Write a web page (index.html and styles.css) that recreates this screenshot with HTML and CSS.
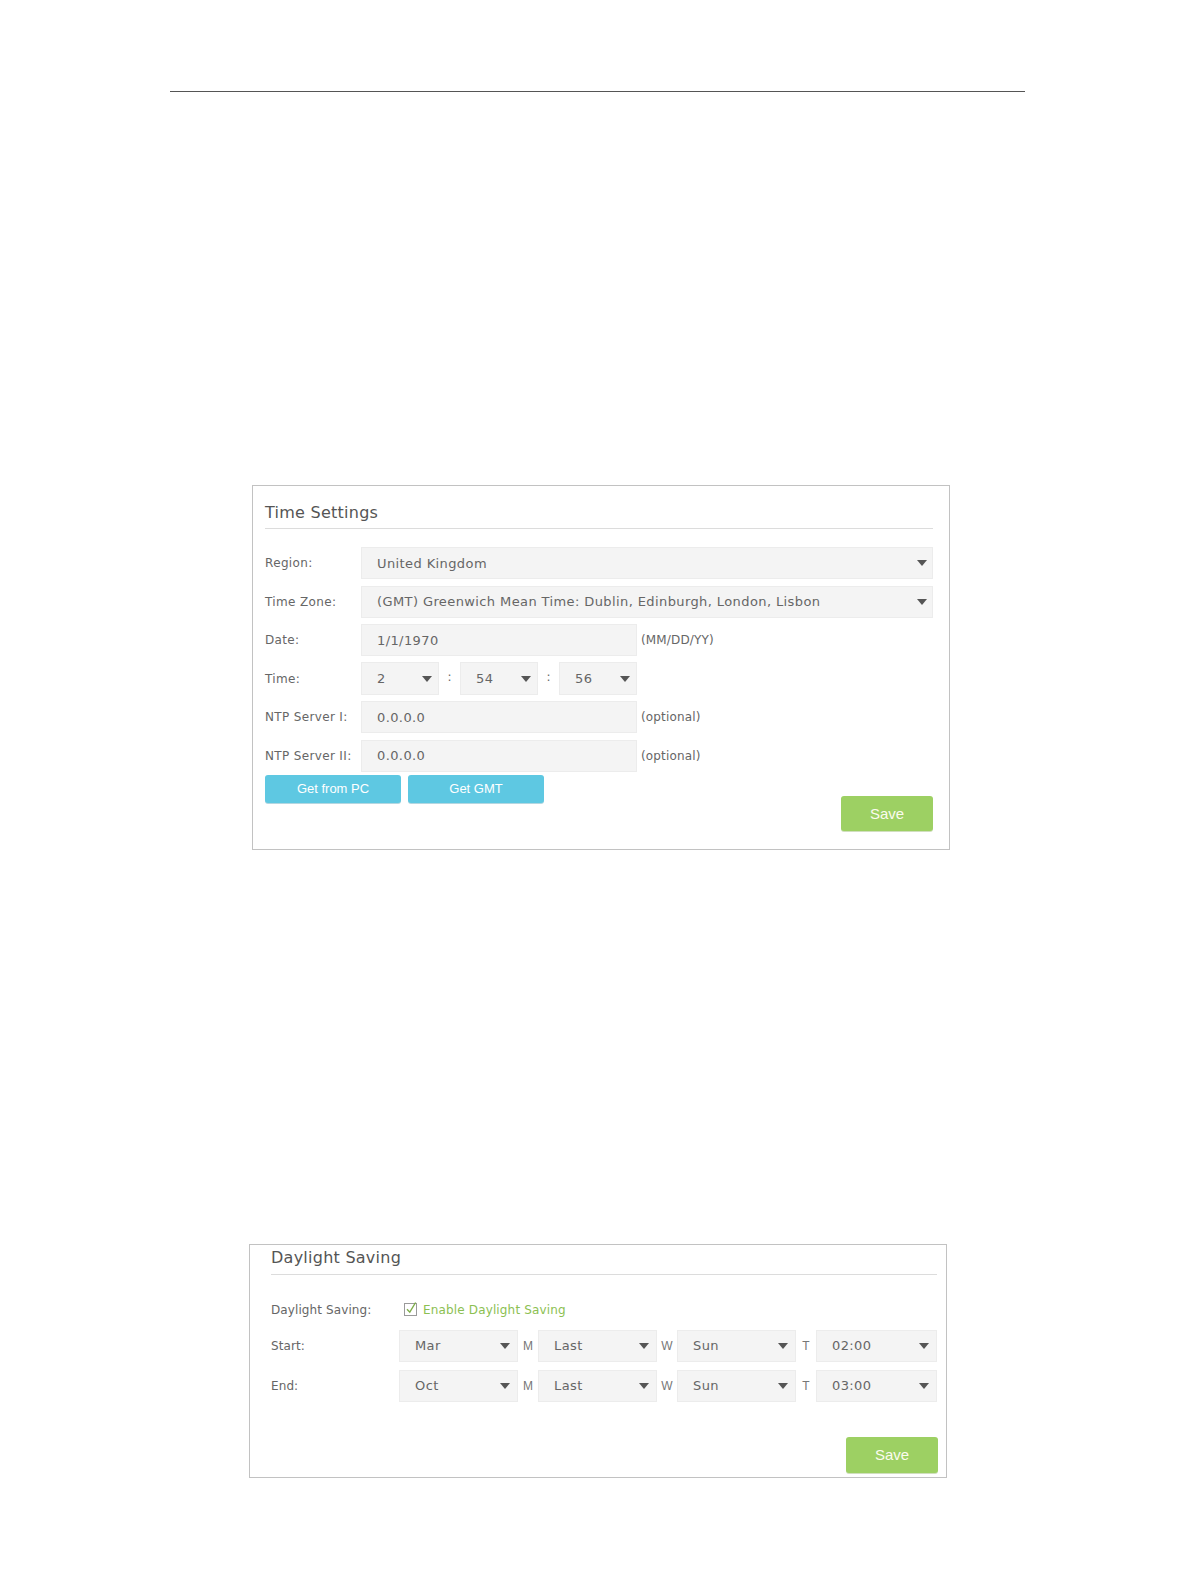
FILE: index.html
```html
<!DOCTYPE html>
<html>
<head>
<meta charset="utf-8">
<title>Time Settings</title>
<link rel="stylesheet" href="styles.css">
</head>
<body>
<div class="page-rule"></div>

<section class="panel panel-time">
  <h2 class="panel-title">Time Settings</h2>
  <div class="form">
    <div class="row">
      <div class="label">Region:</div>
      <div class="control">
        <div class="select select-wide"><span>United Kingdom</span><svg class="arrow" width="10" height="6" viewBox="0 0 10 6"><polygon points="0,0 10,0 5,6"/></svg></div>
      </div>
    </div>
    <div class="row">
      <div class="label">Time Zone:</div>
      <div class="control">
        <div class="select select-wide"><span>(GMT) Greenwich Mean Time: Dublin, Edinburgh, London, Lisbon</span><svg class="arrow" width="10" height="6" viewBox="0 0 10 6"><polygon points="0,0 10,0 5,6"/></svg></div>
      </div>
    </div>
    <div class="row">
      <div class="label">Date:</div>
      <div class="control">
        <div class="field">1/1/1970</div>
        <span class="hint">(MM/DD/YY)</span>
      </div>
    </div>
    <div class="row">
      <div class="label">Time:</div>
      <div class="control">
        <div class="select select-time"><span>2</span><svg class="arrow" width="10" height="6" viewBox="0 0 10 6"><polygon points="0,0 10,0 5,6"/></svg></div>
        <span class="colon">:</span>
        <div class="select select-time"><span>54</span><svg class="arrow" width="10" height="6" viewBox="0 0 10 6"><polygon points="0,0 10,0 5,6"/></svg></div>
        <span class="colon">:</span>
        <div class="select select-time"><span>56</span><svg class="arrow" width="10" height="6" viewBox="0 0 10 6"><polygon points="0,0 10,0 5,6"/></svg></div>
      </div>
    </div>
    <div class="row">
      <div class="label">NTP Server I:</div>
      <div class="control">
        <div class="field">0.0.0.0</div>
        <span class="hint">(optional)</span>
      </div>
    </div>
    <div class="row row-last">
      <div class="label">NTP Server II:</div>
      <div class="control">
        <div class="field">0.0.0.0</div>
        <span class="hint">(optional)</span>
      </div>
    </div>
    <div class="actions">
      <div class="btn btn-blue">Get from PC</div>
      <div class="btn btn-blue">Get GMT</div>
      <div class="btn btn-save btn-save-time">Save</div>
    </div>
  </div>
</section>

<section class="panel panel-dst">
  <h2 class="panel-title">Daylight Saving</h2>
  <div class="form">
    <div class="drow drow-check">
      <div class="dlabel">Daylight Saving:</div>
      <div class="check-wrap">
        <svg class="checkbox" width="14" height="15" viewBox="0 0 14 15"><rect x="0.5" y="2.5" width="12" height="12" fill="#fff" stroke="#9a9a9a"/><path d="M3 8.2 L5.8 11.2 L11.6 1.5" fill="none" stroke="#7fae4a" stroke-width="1.4"/></svg>
        <span class="check-text">Enable Daylight Saving</span>
      </div>
    </div>
    <div class="drow">
      <div class="dlabel">Start:</div>
      <div class="dsel-group">
        <div class="select select-dst"><span>Mar</span><svg class="arrow" width="10" height="6" viewBox="0 0 10 6"><polygon points="0,0 10,0 5,6"/></svg></div>
        <span class="unit">M</span>
        <div class="select select-dst"><span>Last</span><svg class="arrow" width="10" height="6" viewBox="0 0 10 6"><polygon points="0,0 10,0 5,6"/></svg></div>
        <span class="unit">W</span>
        <div class="select select-dst"><span>Sun</span><svg class="arrow" width="10" height="6" viewBox="0 0 10 6"><polygon points="0,0 10,0 5,6"/></svg></div>
        <span class="unit">T</span>
        <div class="select select-dst select-dst-last"><span>02:00</span><svg class="arrow" width="10" height="6" viewBox="0 0 10 6"><polygon points="0,0 10,0 5,6"/></svg></div>
      </div>
    </div>
    <div class="drow drow-last">
      <div class="dlabel">End:</div>
      <div class="dsel-group">
        <div class="select select-dst"><span>Oct</span><svg class="arrow" width="10" height="6" viewBox="0 0 10 6"><polygon points="0,0 10,0 5,6"/></svg></div>
        <span class="unit">M</span>
        <div class="select select-dst"><span>Last</span><svg class="arrow" width="10" height="6" viewBox="0 0 10 6"><polygon points="0,0 10,0 5,6"/></svg></div>
        <span class="unit">W</span>
        <div class="select select-dst"><span>Sun</span><svg class="arrow" width="10" height="6" viewBox="0 0 10 6"><polygon points="0,0 10,0 5,6"/></svg></div>
        <span class="unit">T</span>
        <div class="select select-dst select-dst-last"><span>03:00</span><svg class="arrow" width="10" height="6" viewBox="0 0 10 6"><polygon points="0,0 10,0 5,6"/></svg></div>
      </div>
    </div>
    <div class="dst-actions">
      <div class="btn btn-save btn-save-dst">Save</div>
    </div>
  </div>
</section>
</body>
</html>
```

FILE: styles.css
```css
html, body {
  margin: 0;
  padding: 0;
  background: #ffffff;
}

body {
  font-family: "DejaVu Sans", Verdana, sans-serif;
  color: #666;
}

.page-rule {
  margin: 91px 0 0 170px;
  width: 855px;
  height: 1px;
  background: #555;
}

.panel {
  box-sizing: border-box;
  border: 1px solid #c2c2c2;
  background: #fff;
}

.panel-time {
  margin: 393px 0 0 252px;
  width: 698px;
  padding: 17px 16px 18px 12px;
}

.panel-dst {
  margin: 394px 0 0 249px;
  width: 698px;
  padding: 3px 9px 4px 21px;
}

.panel-title {
  margin: 0;
  font-family: "DejaVu Sans", Verdana, sans-serif;
  font-weight: normal;
  font-size: 16px;
  line-height: 19px;
  letter-spacing: 0.25px;
  color: #555;
  padding-bottom: 6px;
  border-bottom: 1px solid #dcdcdc;
}

.panel-dst .panel-title {
  padding-bottom: 7px;
}

/* Time settings form */
.panel-time .form {
  margin-top: 18px;
}

.row {
  display: flex;
  align-items: center;
  height: 32px;
  margin-bottom: 6.6px;
}

.row-last {
  margin-bottom: 0;
}

.label {
  width: 96px;
  flex: none;
  font-size: 12px;
  letter-spacing: 0.35px;
  color: #666;
}

.control {
  display: flex;
  align-items: center;
  flex: 1;
  height: 100%;
}

.select,
.field {
  box-sizing: border-box;
  height: 32px;
  background: #f4f4f4;
  border: 1px solid #ececec;
  font-size: 13px;
  letter-spacing: 0.4px;
  color: #666;
  display: flex;
  align-items: center;
  padding-left: 15px;
  white-space: nowrap;
}

.select {
  justify-content: space-between;
  padding-right: 6px;
}

.arrow {
  flex: none;
  fill: #555;
}

.select-wide {
  width: 100%;
  padding-right: 5px;
}

.field {
  width: 276px;
}

.hint {
  margin-left: 4px;
  font-size: 12px;
  letter-spacing: 0.15px;
  color: #666;
}

.select-time {
  width: 78px;
  height: 33px;
}

.colon {
  width: 21px;
  text-align: center;
  font-size: 12px;
  color: #666;
  margin-top: -3px;
}

.actions {
  display: flex;
  align-items: flex-start;
  margin-top: 3px;
}

.btn {
  box-sizing: border-box;
  display: flex;
  align-items: center;
  justify-content: center;
  font-family: "Liberation Sans", Arial, sans-serif;
  color: #fff;
  border-radius: 3px;
}

.btn-blue {
  width: 136px;
  height: 28px;
  background: #5ec8e2;
  font-size: 13px;
  margin-right: 7px;
  box-shadow: 0 1px 0 rgba(40, 140, 170, 0.35);
}

.btn-save {
  width: 92px;
  background: #9dd063;
  font-size: 15px;
  color: #fbfbee;
  box-shadow: 0 1px 0 rgba(100, 150, 40, 0.3);
}

.btn-save-time {
  height: 35px;
  margin-left: auto;
  margin-top: 21px;
}

/* Daylight saving form */
.panel-dst .form {
  margin-top: 25px;
}

.drow {
  display: flex;
  align-items: center;
  height: 32px;
  margin-bottom: 8px;
}

.drow-check {
  height: 20px;
  margin-bottom: 10px;
}

.drow-last {
  margin-bottom: 0;
}

.dlabel {
  width: 128px;
  flex: none;
  font-size: 12px;
  letter-spacing: 0.1px;
  color: #666;
}

.check-wrap {
  display: flex;
  align-items: center;
  margin-left: 5px;
}

.checkbox {
  margin-top: -3px;
  flex: none;
}

.check-text {
  margin-left: 5px;
  font-size: 12px;
  letter-spacing: 0.15px;
  color: #8cbf52;
}

.dsel-group {
  display: flex;
  align-items: flex-start;
  height: 32px;
}

.select-dst {
  width: 119px;
  height: 32px;
  padding-right: 7px;
}

.select-dst-last {
  width: 121px;
}

.unit {
  width: 20px;
  text-align: center;
  font-family: "Liberation Sans", Arial, sans-serif;
  font-size: 12px;
  line-height: 14px;
  padding-top: 9px;
  color: #777;
}

.dst-actions {
  display: flex;
  justify-content: flex-end;
  margin-top: 35px;
}

.btn-save-dst {
  height: 36px;
  margin-right: -1px;
}
```
